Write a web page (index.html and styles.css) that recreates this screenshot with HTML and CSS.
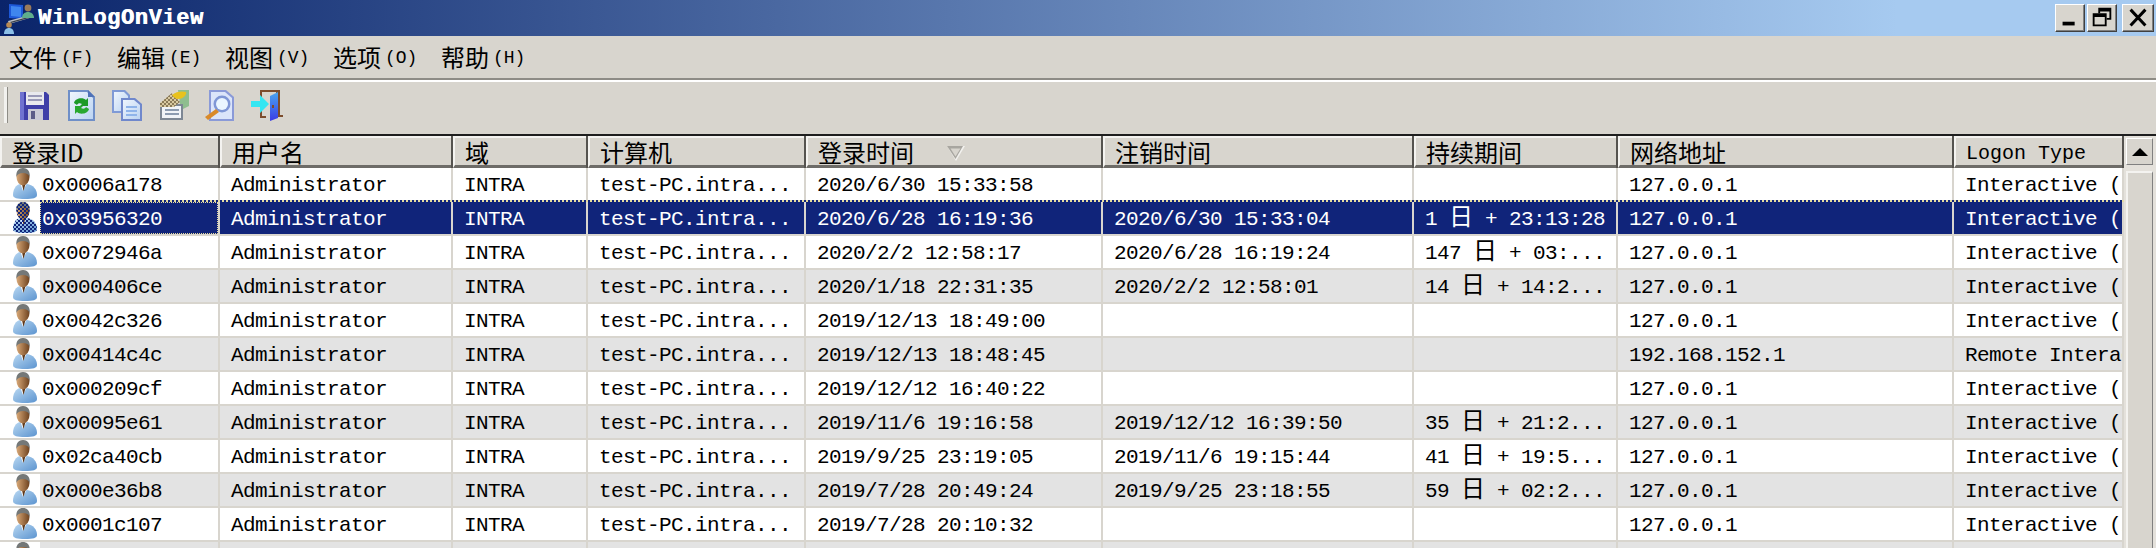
FILE: index.html
```html
<!DOCTYPE html>
<html lang="zh-CN">
<head>
<meta charset="utf-8">
<title>WinLogOnView</title>
<link rel="stylesheet" href="styles.css">
</head>
<body>
<svg class="defs" width="0" height="0" aria-hidden="true">
  <defs>
    <linearGradient id="shirt" x1="0" y1="0" x2="1" y2="1"><stop offset="0" stop-color="#b9d8f2"/><stop offset="1" stop-color="#5b93cf"/></linearGradient>
    <linearGradient id="face" x1="0" y1="0" x2="1" y2="0"><stop offset="0" stop-color="#d8a877"/><stop offset="1" stop-color="#6e421f"/></linearGradient>
    <linearGradient id="doorblue" x1="0" y1="0" x2="0" y2="1"><stop offset="0" stop-color="#4aa6ee"/><stop offset="1" stop-color="#3a3ce6"/></linearGradient>
    <linearGradient id="btnpage" x1="0" y1="0" x2="1" y2="1"><stop offset="0" stop-color="#eef5fd"/><stop offset="1" stop-color="#bcd4f2"/></linearGradient>
    <pattern id="dither" width="4" height="4" patternUnits="userSpaceOnUse"><rect width="2" height="2" fill="#10247a"/><rect x="2" y="2" width="2" height="2" fill="#10247a"/></pattern>
    <pattern id="hatch" width="4" height="4" patternUnits="userSpaceOnUse"><rect width="4" height="4" fill="#d8c9a0"/><rect width="2" height="2" fill="#8a7a58"/><rect x="2" y="2" width="2" height="2" fill="#8a7a58"/></pattern>
    <symbol id="person" viewBox="0 0 26 32">
      <path d="M1 27c0-6 3-10 7-11h7c6 1 10 5 10 11 0 3-4 4-12 4S1 30 1 27z" fill="url(#shirt)"/>
      <path d="M8 15l3 8 4-8z" fill="#f6f9fc"/>
      <path d="M10 16l1.500 7 2-7z" fill="#5e3719"/>
      <ellipse cx="11" cy="9" rx="6.500" ry="8.500" fill="url(#face)"/>
      <path d="M4.500 9C3.500 3 7 0 11 0s7.500 3 6.500 9c-1-3-3-4-6.500-4S5.500 6 4.500 9z" fill="#747878"/>
    </symbol>
    <symbol id="person-sel" viewBox="0 0 26 32">
      <use href="#person" width="26" height="32"/>
      <path d="M1 27c0-6 3-10 7-11h7c6 1 10 5 10 11 0 3-4 4-12 4S1 30 1 27z" fill="url(#dither)"/>
      <ellipse cx="11" cy="9" rx="6.500" ry="8.500" fill="url(#dither)"/>
      <path d="M4.500 9C3.500 3 7 0 11 0s7.500 3 6.500 9z" fill="url(#dither)"/>
    </symbol>
  </defs>
</svg>
<div class="window">
  <header class="titlebar">
    <svg class="app-icon" viewBox="0 0 32 32" aria-hidden="true">
      <path d="M6 2l14 1v14L6 16z" fill="#1d58d8"/>
      <path d="M8 4l10 1v10L8 14z" fill="#3f86ee"/>
      <path d="M5 19l22-6 3 2-24 7z" fill="#b9bec6"/>
      <path d="M7 20l18-5 1 1-18 5z" fill="#3a3f4a"/>
      <circle cx="25" cy="6" r="3.400" fill="#9a7a5a"/>
      <path d="M19 16c0-4 3-6 6-6s6 2 6 6z" fill="#5fae8c"/>
      <circle cx="6" cy="23" r="2.800" fill="#b98a52"/>
      <path d="M1 32c0-4 2-6 5-6s5 2 5 6z" fill="#8cc0e8"/>
    </svg>
    <span class="title-text">WinLogOnView</span>
    <div class="win-buttons">
      <button class="win-btn" type="button" aria-label="最小化"><svg viewBox="0 0 30 28"><rect x="7" y="18" width="13" height="4" fill="#000"/></svg></button>
      <button class="win-btn" type="button" aria-label="还原"><svg viewBox="0 0 30 28"><path d="M11 3h14v13h-5v-2h3V7H13v2h-2z" fill="#000"/><path d="M5 9h15v14H5zm2 4v8h11v-8z" fill="#000" fill-rule="evenodd"/></svg></button>
      <button class="win-btn win-close" type="button" aria-label="关闭"><svg viewBox="0 0 32 28"><path d="M8 5l16 17M24 5L8 22" stroke="#000" stroke-width="3.200" fill="none"/></svg></button>
    </div>
  </header>

  <nav class="menubar">
    <span class="menu-item">文件<span class="accel">(F)</span></span>
    <span class="menu-item">编辑<span class="accel">(E)</span></span>
    <span class="menu-item">视图<span class="accel">(V)</span></span>
    <span class="menu-item">选项<span class="accel">(O)</span></span>
    <span class="menu-item">帮助<span class="accel">(H)</span></span>
  </nav>

  <div class="toolbar">
    <span class="grip"></span>
    <svg class="tool" viewBox="0 0 32 32" aria-hidden="true">
      <path d="M2 3h26l3 3v25H2z" fill="#3f3fa8"/>
      <path d="M2 3h4v28H2z" fill="#6f72d0"/>
      <rect x="8" y="3" width="18" height="13" fill="#e9e9ee"/>
      <rect x="10" y="6" width="14" height="2" fill="#9a9ab8"/>
      <rect x="10" y="10" width="14" height="2" fill="#9a9ab8"/>
      <rect x="10" y="20" width="15" height="11" fill="#c9c9d6"/>
      <rect x="13" y="22" width="4" height="8" fill="#5a5a88"/>
    </svg>
    <svg class="tool" viewBox="0 0 32 32" aria-hidden="true">
      <path d="M3 1h20l7 7v24H3z" fill="#6f8fc8"/>
      <path d="M5 3h17l6 6v21H5z" fill="url(#btnpage)"/>
      <path d="M23 1v7h7z" fill="#4f72b8"/>
      <path d="M9 14c1-5 9-6 12-3l2-2v8h-8l2-2c-2-1-4-1-5 1z" fill="#1c9a28"/>
      <path d="M24 20c-1 5-9 6-12 3l-2 2v-8h8l-2 2c2 1 4 1 5-1z" fill="#28a830"/>
    </svg>
    <svg class="tool" viewBox="0 0 32 32" aria-hidden="true">
      <path d="M1 1h13l5 5v18H1z" fill="#7f9ad6"/>
      <path d="M3 3h10l4 4v15H3z" fill="url(#btnpage)"/>
      <path d="M10 9h14l7 6v17H10z" fill="#7088cc"/>
      <path d="M12 11h11l6 5v14H12z" fill="url(#btnpage)"/>
      <path d="M15 17h11v2H15zm0 4h11v2H15zm0 4h11v2H15z" fill="#8fb4ea"/>
    </svg>
    <svg class="tool" viewBox="0 0 32 32" aria-hidden="true">
      <path d="M20 1h11v16l-8 4z" fill="#8fbe8f"/>
      <path d="M2 15h23v16H2z" fill="#7d8794"/>
      <path d="M4 17h19v12H4z" fill="#f0f3f7"/>
      <path d="M7 20h14v2H7zm0 4h14v2H7z" fill="#8c9bb0"/>
      <path d="M2 14L14 4l8 9-6 5H2z" fill="url(#hatch)"/>
      <path d="M14 6c4-4 11-4 14-3 1 2-2 7-8 7-2 0-5-2-6-4z" fill="#e8c21e"/>
    </svg>
    <svg class="tool" viewBox="0 0 32 32" aria-hidden="true">
      <path d="M5 1h17l8 7v24H5z" fill="#8a9ad8"/>
      <path d="M7 3h14l7 6v21H7z" fill="#dbe5fa"/>
      <circle cx="18" cy="15" r="8.500" fill="#7f97d6"/>
      <circle cx="18" cy="15" r="6" fill="#eaf6ff"/>
      <path d="M12 20L1 28l3 3 11-8z" fill="#d98a2a"/>
    </svg>
    <svg class="tool" viewBox="0 0 32 32" aria-hidden="true">
      <path d="M9 1h20v25h3v2h-7V3H11v9H9z" fill="#7c4c2c"/>
      <path d="M9 21h2v6h4v2H9z" fill="#7c4c2c"/>
      <path d="M19 7l8-4v26l-8 3z" fill="url(#doorblue)"/>
      <rect x="21" y="16" width="2" height="3" fill="#7c4c2c"/>
      <path d="M0 12h9V6l9 9-9 9v-6H0z" fill="#35e6f2"/>
    </svg>
  </div>

  <div class="list-area">
    <div class="list">
      <div class="thead">
        <div class="th">登录ID</div>
        <div class="th">用户名</div>
        <div class="th">域</div>
        <div class="th">计算机</div>
        <div class="th th-sorted">登录时间<svg class="sort" viewBox="0 0 20 17" aria-hidden="true"><path d="M1 1h18L10 16z" fill="#f2f1ee"/><path d="M1 1h16L9.500 14z" fill="#a8a6a0"/><path d="M4.500 3.500h10L9.500 11.500z" fill="#d8d5ce"/></svg></div>
        <div class="th">注销时间</div>
        <div class="th">持续期间</div>
        <div class="th">网络地址</div>
        <div class="th th-latin">Logon Type</div>
      </div>

      <div class="row">
        <div class="cell first"><span class="ico"><svg class="person"><use href="#person"/></svg></span><span class="id">0x0006a178</span></div>
        <div class="cell">Administrator</div><div class="cell">INTRA</div><div class="cell">test-PC.intra...</div>
        <div class="cell">2020/6/30 15:33:58</div><div class="cell"></div><div class="cell"></div>
        <div class="cell">127.0.0.1</div><div class="cell clip">Interactive (2)</div>
      </div>
      <div class="row selected">
        <div class="cell first"><span class="ico"><svg class="person"><use href="#person-sel"/></svg></span><span class="id">0x03956320</span></div>
        <div class="cell">Administrator</div><div class="cell">INTRA</div><div class="cell">test-PC.intra...</div>
        <div class="cell">2020/6/28 16:19:36</div><div class="cell">2020/6/30 15:33:04</div><div class="cell">1 <span class="cjk">日</span> + 23:13:28</div>
        <div class="cell">127.0.0.1</div><div class="cell clip">Interactive (2)</div>
      </div>
      <div class="row">
        <div class="cell first"><span class="ico"><svg class="person"><use href="#person"/></svg></span><span class="id">0x0072946a</span></div>
        <div class="cell">Administrator</div><div class="cell">INTRA</div><div class="cell">test-PC.intra...</div>
        <div class="cell">2020/2/2 12:58:17</div><div class="cell">2020/6/28 16:19:24</div><div class="cell">147 <span class="cjk">日</span> + 03:...</div>
        <div class="cell">127.0.0.1</div><div class="cell clip">Interactive (2)</div>
      </div>
      <div class="row alt">
        <div class="cell first"><span class="ico"><svg class="person"><use href="#person"/></svg></span><span class="id">0x000406ce</span></div>
        <div class="cell">Administrator</div><div class="cell">INTRA</div><div class="cell">test-PC.intra...</div>
        <div class="cell">2020/1/18 22:31:35</div><div class="cell">2020/2/2 12:58:01</div><div class="cell">14 <span class="cjk">日</span> + 14:2...</div>
        <div class="cell">127.0.0.1</div><div class="cell clip">Interactive (2)</div>
      </div>
      <div class="row">
        <div class="cell first"><span class="ico"><svg class="person"><use href="#person"/></svg></span><span class="id">0x0042c326</span></div>
        <div class="cell">Administrator</div><div class="cell">INTRA</div><div class="cell">test-PC.intra...</div>
        <div class="cell">2019/12/13 18:49:00</div><div class="cell"></div><div class="cell"></div>
        <div class="cell">127.0.0.1</div><div class="cell clip">Interactive (2)</div>
      </div>
      <div class="row alt">
        <div class="cell first"><span class="ico"><svg class="person"><use href="#person"/></svg></span><span class="id">0x00414c4c</span></div>
        <div class="cell">Administrator</div><div class="cell">INTRA</div><div class="cell">test-PC.intra...</div>
        <div class="cell">2019/12/13 18:48:45</div><div class="cell"></div><div class="cell"></div>
        <div class="cell">192.168.152.1</div><div class="cell clip">Remote Interactive (10)</div>
      </div>
      <div class="row">
        <div class="cell first"><span class="ico"><svg class="person"><use href="#person"/></svg></span><span class="id">0x000209cf</span></div>
        <div class="cell">Administrator</div><div class="cell">INTRA</div><div class="cell">test-PC.intra...</div>
        <div class="cell">2019/12/12 16:40:22</div><div class="cell"></div><div class="cell"></div>
        <div class="cell">127.0.0.1</div><div class="cell clip">Interactive (2)</div>
      </div>
      <div class="row alt">
        <div class="cell first"><span class="ico"><svg class="person"><use href="#person"/></svg></span><span class="id">0x00095e61</span></div>
        <div class="cell">Administrator</div><div class="cell">INTRA</div><div class="cell">test-PC.intra...</div>
        <div class="cell">2019/11/6 19:16:58</div><div class="cell">2019/12/12 16:39:50</div><div class="cell">35 <span class="cjk">日</span> + 21:2...</div>
        <div class="cell">127.0.0.1</div><div class="cell clip">Interactive (2)</div>
      </div>
      <div class="row">
        <div class="cell first"><span class="ico"><svg class="person"><use href="#person"/></svg></span><span class="id">0x02ca40cb</span></div>
        <div class="cell">Administrator</div><div class="cell">INTRA</div><div class="cell">test-PC.intra...</div>
        <div class="cell">2019/9/25 23:19:05</div><div class="cell">2019/11/6 19:15:44</div><div class="cell">41 <span class="cjk">日</span> + 19:5...</div>
        <div class="cell">127.0.0.1</div><div class="cell clip">Interactive (2)</div>
      </div>
      <div class="row alt">
        <div class="cell first"><span class="ico"><svg class="person"><use href="#person"/></svg></span><span class="id">0x000e36b8</span></div>
        <div class="cell">Administrator</div><div class="cell">INTRA</div><div class="cell">test-PC.intra...</div>
        <div class="cell">2019/7/28 20:49:24</div><div class="cell">2019/9/25 23:18:55</div><div class="cell">59 <span class="cjk">日</span> + 02:2...</div>
        <div class="cell">127.0.0.1</div><div class="cell clip">Interactive (2)</div>
      </div>
      <div class="row">
        <div class="cell first"><span class="ico"><svg class="person"><use href="#person"/></svg></span><span class="id">0x0001c107</span></div>
        <div class="cell">Administrator</div><div class="cell">INTRA</div><div class="cell">test-PC.intra...</div>
        <div class="cell">2019/7/28 20:10:32</div><div class="cell"></div><div class="cell"></div>
        <div class="cell">127.0.0.1</div><div class="cell clip">Interactive (2)</div>
      </div>
      <div class="row alt">
        <div class="cell first"><span class="ico"><svg class="person"><use href="#person"/></svg></span><span class="id"></span></div>
        <div class="cell"></div><div class="cell"></div><div class="cell"></div>
        <div class="cell"></div><div class="cell"></div><div class="cell"></div>
        <div class="cell"></div><div class="cell"></div>
      </div>
    </div>

    <div class="scrollbar">
      <div class="sb-btn"><svg viewBox="0 0 16 8" aria-hidden="true"><path d="M8 0l8 8H0z" fill="#000"/></svg></div>
      <div class="sb-thumb"></div>
    </div>
  </div>
</div>
</body>
</html>
```

FILE: styles.css
```css
* { box-sizing: border-box; }
html, body { margin: 0; padding: 0; }
body {
  width: 2156px;
  height: 548px;
  overflow: hidden;
  background: #d4d0c8;
  font-family: "Liberation Mono", "Noto Sans CJK SC", monospace;
  color: #000;
}
.defs { position: absolute; }
.window {
  display: flex;
  flex-direction: column;
  height: 548px;
  overflow: hidden;
}

/* title bar */
.titlebar {
  flex: none;
  height: 36px;
  display: flex;
  align-items: center;
  padding: 0 2px 0 3px;
  background: linear-gradient(90deg, #0a246a 0%, #a6caf0 88%, #a6caf0 100%);
}
.app-icon { width: 32px; height: 32px; flex: none; }
.title-text {
  margin-left: 3px;
  font-family: "Liberation Mono", monospace;
  font-size: 22px;
  font-weight: 700;
  letter-spacing: 0.6px;
  color: #fff;
  text-shadow: 0.6px 0 0 #fff;
}
.win-buttons {
  margin-left: auto;
  display: flex;
  align-items: center;
  gap: 2px;
}
.win-btn {
  width: 30px;
  height: 28px;
  padding: 0;
  background: #d8d5ce;
  border: 1px solid;
  border-color: #fff #404040 #404040 #fff;
  box-shadow: inset -1px -1px 0 #808080;
  display: flex;
}
.win-btn svg { width: 100%; height: 100%; }
.win-close { margin-left: 3px; width: 32px; }

/* menu */
.menubar {
  flex: none;
  height: 44px;
  display: flex;
  align-items: center;
  gap: 18px;
  padding: 1px 0 1px 9px;
  background: #d8d5ce;
  border-bottom: 2px solid #8e8c86;
  box-shadow: 0 2px 0 #fff;
  position: relative;
}
.menu-item {
  display: flex;
  align-items: center;
  font-family: "Noto Sans CJK SC", sans-serif;
  font-size: 24px;
  line-height: 32px;
  width: 90px;
}
.accel {
  font-family: "Liberation Mono", monospace;
  font-size: 18px;
  line-height: 32px;
  margin-left: 4px;
  padding-top: 2px;
}

/* toolbar */
.toolbar {
  flex: none;
  height: 54px;
  display: flex;
  align-items: center;
  gap: 14.500px;
  padding: 2px 0 6px 4px;
  background: #d8d5ce;
}
.grip {
  width: 4px;
  height: 36px;
  margin-right: -4.500px;
  background: #f2f1ee;
  border-right: 1px solid #8e8c86;
}
.tool { width: 32px; height: 32px; flex: none; }

/* list */
.list-area {
  flex: 1;
  min-height: 0;
  display: flex;
  border-top: 2px solid #1e1e1e;
  background: #d4d0c8;
}
.list { width: 2124px; flex: none; overflow: hidden; background: #d8d5ce; }
.thead, .row {
  display: grid;
  grid-template-columns: 218px 231px 133px 216px 295px 309px 202px 334px 168px;
  column-gap: 2px;
}
.thead { height: 32px; background: #55534f; }
.th {
  height: 32px;
  padding: 0 0 0 10px;
  font-family: "Noto Sans CJK SC", sans-serif;
  font-size: 24px;
  line-height: 27px;
  background: #d8d5ce;
  border-top: 2px solid #f4f3f0;
  border-left: 2px solid #f4f3f0;
  border-bottom: 3px solid #6e6c68;
  white-space: nowrap;
}
.th-sorted { display: flex; align-items: flex-start; }
.sort { width: 20px; height: 17px; margin: 7px 0 0 32px; flex: none; }
.th-latin {
  font-family: "Liberation Mono", monospace;
  font-size: 20px;
  line-height: 31px;
}
.row { height: 34px; padding-bottom: 2px; background: #d8d5ce; }
.cell {
  height: 32px;
  padding-left: 11px;
  background: #fff;
  font-size: 21px;
  letter-spacing: -0.6px;
  line-height: 35px;
  white-space: nowrap;
}
.clip { overflow: hidden; }
.first { display: flex; padding: 0; background: #fff; }
.ico { flex: none; width: 40px; height: 32px; background: #fff; padding-left: 12px; }
.person { display: block; width: 26px; height: 32px; }
.id { flex: 1; padding-left: 2px; }
.cjk { font-family: "Noto Sans CJK SC", sans-serif; font-size: 24px; line-height: 24px; letter-spacing: 0; }
.alt .cell { background: #e3e3e3; }
.selected .cell { background: #10247a; color: #fff; }
.alt .first, .selected .first { background: #fff; }
.alt .id { background: #e3e3e3; }
.selected .id { background: #10247a; outline: 1px dotted #e6dca0; outline-offset: -1px; }
.selected { position: relative; }
.selected::before {
  content: "";
  position: absolute;
  left: 40px;
  right: 0;
  top: -2px;
  height: 2px;
  background: repeating-linear-gradient(90deg, #10247a 0 2px, #e6dca0 2px 4px);
}

/* scrollbar */
.scrollbar {
  flex: none;
  width: 32px;
  display: flex;
  flex-direction: column;
  gap: 6px;
  padding: 2px 3px 0 2px;
  background: #e4e1db;
}
.sb-btn {
  flex: none;
  height: 27px;
  display: flex;
  align-items: center;
  justify-content: center;
  background: #d8d5ce;
  border: 1px solid;
  border-color: #fff #808080 #808080 #fff;
}
.sb-btn svg { width: 16px; height: 8px; }
.sb-thumb {
  flex: 1;
  background: #d8d5ce;
  border-top: 2px solid #f4f3f0;
  border-left: 2px solid #f4f3f0;
  border-right: 1px solid #808080;
}
```
